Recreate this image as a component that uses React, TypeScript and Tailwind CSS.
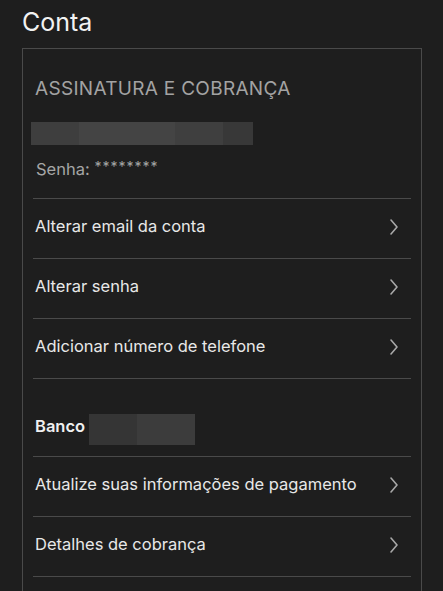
import React from "react";

function Chevron() {
  return (
    <svg width="10" height="18" viewBox="0 0 10 18" className="shrink-0">
      <path d="M2 2 L8 9 L2 16" fill="none" stroke="#a8a8a8" strokeWidth="1.6" strokeLinecap="round" strokeLinejoin="round" />
    </svg>
  );
}

function Row({ label }: { label: string }) {
  return (
    <div className="flex h-[60px] items-center justify-between border-b border-[#4a4a4a] pb-[4px] pl-[2px] pr-[12px]">
      <span className="text-[16.5px] text-[#e8e8e8]">{label}</span>
      <Chevron />
    </div>
  );
}

export default function App() {
  return (
    <div className="min-h-[591px] w-[443px] bg-[#1e1e1e] pl-[22px] pr-[21px] pt-[5px]" style={{ fontFamily: "Inter, 'Noto Sans', sans-serif" }}>
      <h1 className="text-[25px] leading-[34px] text-[#f2f2f2]">Conta</h1>
      <div className="mt-[9px] border border-[#4a4a4a] pl-[10px] pr-[10px] pt-[27px]">
        <div className="pl-[2px] text-[19px] leading-[26px] tracking-[0.3px] text-[#a3a3a3]">ASSINATURA E COBRANÇA</div>
        <div className="-ml-[2px] mt-[20px] flex h-[23px] w-[222px]">
          <div className="w-[48px] bg-[#3e3e3e]" />
          <div className="w-[96px] bg-[#444444]" />
          <div className="w-[48px] bg-[#3f3f3f]" />
          <div className="w-[30px] bg-[#383838]" />
        </div>
        <div className="mt-[13px] pl-[3px] text-[16.5px] leading-[22px] text-[#a6a6a6]">
          Senha: <span className="relative top-[-3px] text-[14px] tracking-[1px]">********</span>
        </div>
        <div className="mt-[17px] border-b border-[#4a4a4a]" />
        <Row label="Alterar email da conta" />
        <Row label="Alterar senha" />
        <Row label="Adicionar número de telefone" />
        <div className="flex h-[78px] items-end border-b border-[#4a4a4a] pb-[17px] pl-[2px]">
          <span className="text-[16.5px] font-semibold text-[#f0f0f0]">Banco</span>
          <div className="ml-[4px] mb-[-6px] flex h-[31px] w-[106px]">
            <div className="w-[48px] bg-[#353535]" />
            <div className="w-[58px] bg-[#3c3c3c]" />
          </div>
        </div>
        <Row label="Atualize suas informações de pagamento" />
        <Row label="Detalhes de cobrança" />
        <div className="h-[40px]" />
      </div>
    </div>
  );
}
